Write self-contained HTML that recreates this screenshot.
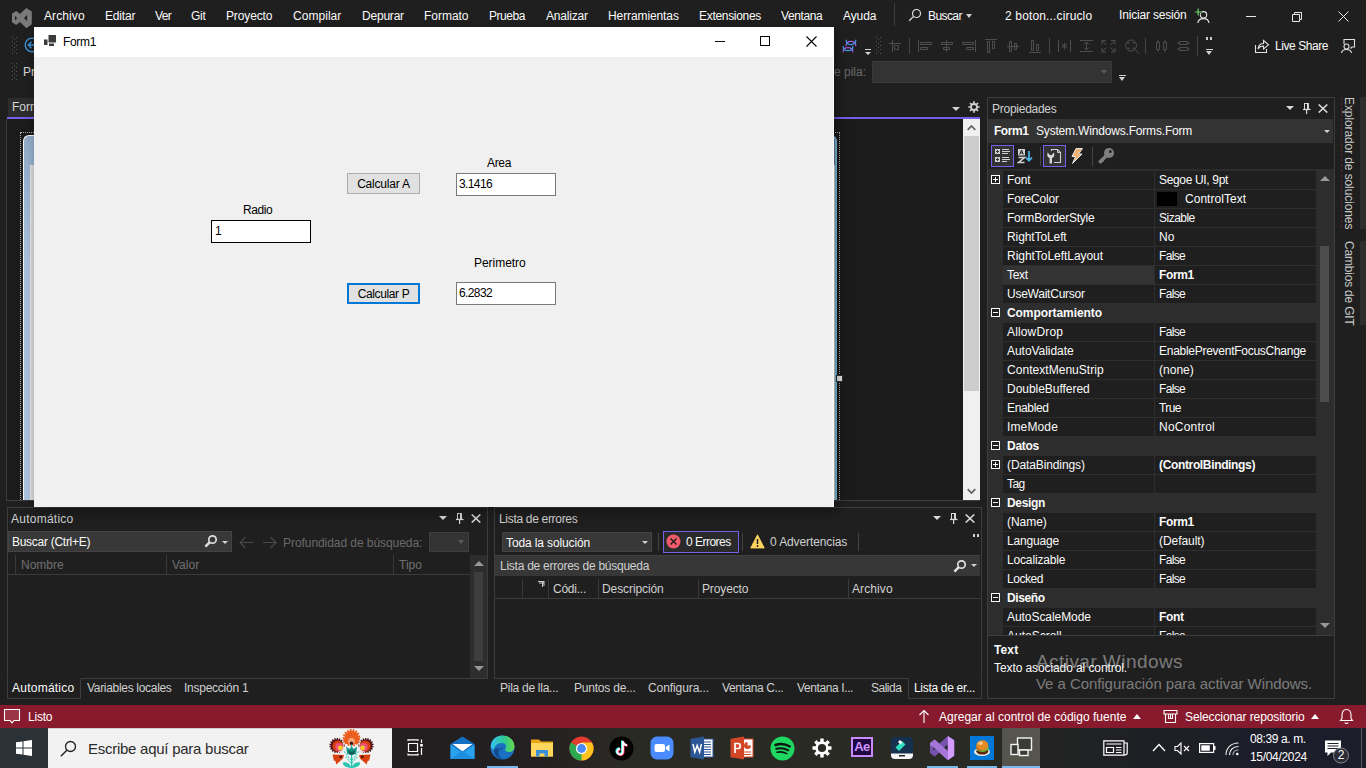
<!DOCTYPE html>
<html lang="es"><head>
<meta charset="utf-8">
<title>Form1</title>
<style>
*{box-sizing:border-box;margin:0;padding:0}
html,body{width:1366px;height:768px;overflow:hidden;background:#1f1f1f}
body{position:relative;font-family:"Liberation Sans",sans-serif;font-size:12px;color:#fafafa}
.a{position:absolute;white-space:nowrap}
.t{position:absolute;white-space:nowrap;line-height:16px;height:16px}
.dim{color:#6d6d6d}
.gr{color:#d6d6d6}
/* menu */
#menubar{left:0;top:0;width:1366px;height:30px;background:#1f1f1f}
#menubar .t{top:8px;font-size:12px;color:#fafafa}
/* status */
#status{left:0;top:705px;width:1366px;height:23px;background:#871b2d}
#status .t{top:4px;font-size:12px;color:#fff}
/* taskbar */
#taskbar{left:0;top:728px;width:1366px;height:40px;background:linear-gradient(90deg,#22262a 0,#221f20 29%,#241f20 39%,#2a2a25 46%,#2a2a24 72%,#222322 77%,#1f2025 84%,#1c1d2b 95%)}
/* panels */
.panel{position:absolute;border:1px solid #3d3d3d;background:#1f1f1f}
/* form window */
#form{left:34px;top:27px;width:800px;height:480px;background:#f0f0f0;box-shadow:3px 4px 12px 0 rgba(0,0,0,.4)}
#ftitle{left:0;top:0;width:800px;height:30px;background:#fff}
#form .t{color:#000;font-size:12px}
.tb{position:absolute;background:#fff;border:1px solid #7a7a7a;height:23px;width:100px;color:#000;font-size:12px;line-height:21px;padding-left:2px}
.btn{position:absolute;background:#e1e1e1;border:1px solid #adadad;height:21px;width:73px;color:#000;font-size:12px;line-height:20px;text-align:center}
/* property grid */
.pr{position:absolute;left:15px;width:313px;height:19px;background:#1f1f1f;border-bottom:1px solid #2e2e2e}
.pr .n{position:absolute;left:4px;top:1px;line-height:16px;font-size:12px;color:#fafafa}
.pr .v{position:absolute;left:156px;top:1px;line-height:16px;font-size:12px;color:#fafafa}
.pr i{position:absolute;left:151px;top:0;width:1px;height:19px;background:#2e2e2e}
.cat{position:absolute;left:0;width:328px;height:19px;background:#2d2d2d}
.cat .n{position:absolute;left:19px;top:1px;line-height:16px;font-size:12px;font-weight:bold;color:#fafafa}
.pm{position:absolute;left:3px;width:9px;height:9px;border:1px solid #fafafa;background:#1f1f1f}
.pm:before{content:"";position:absolute;left:1px;top:3px;width:5px;height:1px;background:#fafafa}
.pm.plus:after{content:"";position:absolute;left:3px;top:1px;width:1px;height:5px;background:#fafafa}
b{font-weight:bold}
</style>
</head>
<body>

<!-- ===== MENU BAR ===== -->
<div id="menubar" class="a">
  <div class="t" style="left: 44px; letter-spacing: 0.1px;">Archivo</div>
  <div class="t" style="left: 105px; letter-spacing: -0.19px;">Editar</div>
  <div class="t" style="left: 155px; letter-spacing: -0.64px;">Ver</div>
  <div class="t" style="left: 191px; letter-spacing: -0.25px;">Git</div>
  <div class="t" style="left: 226px; letter-spacing: -0.13px;">Proyecto</div>
  <div class="t" style="left: 293px; letter-spacing: 0.04px;">Compilar</div>
  <div class="t" style="left: 362px; letter-spacing: -0.21px;">Depurar</div>
  <div class="t" style="left: 424px; letter-spacing: -0.03px;">Formato</div>
  <div class="t" style="left: 489px; letter-spacing: -0.45px;">Prueba</div>
  <div class="t" style="left: 546px; letter-spacing: -0.18px;">Analizar</div>
  <div class="t" style="left: 608px; letter-spacing: -0.1px;">Herramientas</div>
  <div class="t" style="left: 699px; letter-spacing: -0.31px;">Extensiones</div>
  <div class="t" style="left: 781px; letter-spacing: -0.41px;">Ventana</div>
  <div class="t" style="left: 843px; letter-spacing: -0.1px;">Ayuda</div>
  <div class="t" style="left: 928px; letter-spacing: -0.58px;">Buscar</div>
  <div class="t" style="left: 1005px; letter-spacing: 0.15px;">2 boton...ciruclo</div>
  <div class="t" style="left: 1119px; top: 7px; letter-spacing: -0.18px;">Iniciar sesión</div>
</div>


<!-- VS logo -->
<svg class="a" style="left:11px;top:7px" width="22" height="22" viewBox="0 0 22 22"><path d="M1 6.700 L5.200 4 L9 6.900 L15.300 0.900 L20.800 4.400 V17.300 L15.300 21.200 L9 15.100 L5.200 18 L1 15.300 Z M4 8.700 V13.400 L6.100 11 Z M16.100 7.900 V14.100 L13 11 Z" fill="#7a7a7a" fill-rule="evenodd"></path></svg>
<!-- search icon in menubar -->
<svg class="a" style="left:908px;top:8px" width="14" height="14" viewBox="0 0 14 14"><circle cx="8.5" cy="5.5" r="4" fill="none" stroke="#e0e0e0" stroke-width="1.2"></circle><path d="M5.6 8.4 L1.2 12.8" stroke="#e0e0e0" stroke-width="1.3"></path></svg>
<div class="a" style="left:966px;top:14px;border:3.5px solid transparent;border-top:4px solid #d0d0d0;width:0;height:0"></div>
<div class="a" style="left:894px;top:3px;width:1px;height:23px;background:#3d3d3d"></div>
<!-- sign-in user icon -->
<svg class="a" style="left:1194px;top:7px" width="17" height="17" viewBox="0 0 17 17"><circle cx="9.500" cy="7.800" r="3.200" fill="none" stroke="#e8e8e8" stroke-width="1.100"></circle><path d="M3.800 16 C4.200 12.400 7 11.600 9.500 11.600 C12 11.600 14.600 12.400 15 16" fill="none" stroke="#e8e8e8" stroke-width="1.100"></path><path d="M4.200 1.600 V8.400 M0.800 5 H7.600" stroke="#1f1f1f" stroke-width="2.600"></path><path d="M4.200 1.600 V8.400 M0.800 5 H7.600" stroke="#6fd36f" stroke-width="1.200"></path></svg>
<!-- window controls -->
<div class="a" style="left:1246px;top:16px;width:10px;height:1px;background:#e8e8e8"></div>
<svg class="a" style="left:1291px;top:11px" width="12" height="12" viewBox="0 0 12 12"><path d="M1.5 3.5 H8.5 V10.5 H1.5 Z" fill="none" stroke="#e8e8e8" stroke-width="1"></path><path d="M3.5 3.5 V1.5 H10.5 V8.5 H8.5" fill="none" stroke="#e8e8e8" stroke-width="1"></path></svg>
<svg class="a" style="left:1338px;top:11px" width="11" height="11" viewBox="0 0 11 11"><path d="M0.5 0.5 L10.5 10.5 M10.5 0.5 L0.5 10.5" stroke="#e8e8e8" stroke-width="1"></path></svg>

<!-- ===== TOOLBAR ROW 1 ===== -->
<svg class="a" style="left:11px;top:36px" width="6" height="46" viewBox="0 0 6 46"><g fill="#555"><rect x="1" y="1" width="1" height="1"></rect><rect x="3" y="3" width="1" height="1"></rect><rect x="1" y="5" width="1" height="1"></rect><rect x="3" y="7" width="1" height="1"></rect><rect x="1" y="9" width="1" height="1"></rect><rect x="3" y="11" width="1" height="1"></rect><rect x="1" y="13" width="1" height="1"></rect><rect x="3" y="15" width="1" height="1"></rect><rect x="1" y="17" width="1" height="1"></rect><rect x="5" y="1" width="1" height="1"></rect><rect x="5" y="5" width="1" height="1"></rect><rect x="5" y="9" width="1" height="1"></rect><rect x="5" y="13" width="1" height="1"></rect><rect x="5" y="17" width="1" height="1"></rect>
<rect x="1" y="27" width="1" height="1"></rect><rect x="3" y="29" width="1" height="1"></rect><rect x="1" y="31" width="1" height="1"></rect><rect x="3" y="33" width="1" height="1"></rect><rect x="1" y="35" width="1" height="1"></rect><rect x="3" y="37" width="1" height="1"></rect><rect x="1" y="39" width="1" height="1"></rect><rect x="3" y="41" width="1" height="1"></rect><rect x="1" y="43" width="1" height="1"></rect><rect x="5" y="27" width="1" height="1"></rect><rect x="5" y="31" width="1" height="1"></rect><rect x="5" y="35" width="1" height="1"></rect><rect x="5" y="39" width="1" height="1"></rect><rect x="5" y="43" width="1" height="1"></rect></g></svg>
<svg class="a" style="left:24px;top:37px" width="16" height="16" viewBox="0 0 16 16"><circle cx="8" cy="8" r="6.8" fill="none" stroke="#3a96dd" stroke-width="1.3"></circle><path d="M12 8 H4.5 M7.5 4.8 L4.3 8 L7.5 11.2" fill="none" stroke="#3a96dd" stroke-width="1.3"></path></svg>
<div class="t" style="left:23px;top:64px;font-size:12px;color:#d6d6d6">Proceso:</div>


<!-- toolbar row1 right icons -->
<svg class="a" style="left:842px;top:39px" width="15" height="14" viewBox="0 0 15 14" fill="none" stroke-width="1.250" stroke-linecap="round"><g><path d="M4.200 6.600 C4.200 3.300 6.700 2.300 8.900 2.300 C11.200 2.300 13.800 3.300 13.800 6.600" stroke="#a45ddb"></path><path d="M4.200 1.200 C4.200 4.300 6.700 5.500 8.900 5.500 C11.200 5.500 13.800 4.300 13.800 1.200" stroke="#3f9cf0"></path></g><g transform="translate(-3 6.200)"><path d="M4.200 6.600 C4.200 3.300 6.700 2.300 8.900 2.300 C11.200 2.300 13.800 3.300 13.800 6.600" stroke="#a45ddb"></path><path d="M4.200 1.200 C4.200 4.300 6.700 5.500 8.900 5.500 C11.200 5.500 13.800 4.300 13.800 1.200" stroke="#3f9cf0"></path></g></svg>
<div class="a" style="left:865px;top:49px;width:6px;height:1px;background:#d0d0d0"></div>
<div class="a" style="left:865px;top:52px;border:3px solid transparent;border-top:3.500px solid #d8d8d8;width:0;height:0"></div>
<svg class="a" style="left:875px;top:36px" width="6" height="19" viewBox="0 0 6 19"><g fill="#555"><rect x="1" y="1" width="1" height="1"></rect><rect x="3" y="3" width="1" height="1"></rect><rect x="1" y="5" width="1" height="1"></rect><rect x="3" y="7" width="1" height="1"></rect><rect x="1" y="9" width="1" height="1"></rect><rect x="3" y="11" width="1" height="1"></rect><rect x="1" y="13" width="1" height="1"></rect><rect x="3" y="15" width="1" height="1"></rect><rect x="1" y="17" width="1" height="1"></rect><rect x="5" y="1" width="1" height="1"></rect><rect x="5" y="5" width="1" height="1"></rect><rect x="5" y="9" width="1" height="1"></rect><rect x="5" y="13" width="1" height="1"></rect><rect x="5" y="17" width="1" height="1"></rect></g></svg>
<svg class="a" style="left:888px;top:38px" width="304" height="16" viewBox="0 0 304 16" fill="none" stroke="#4e4e4e" stroke-width="1">
 <!-- align to grid (x 889-901) -->
 <path d="M1 5.5 H13 M4.5 2 V14 M6.5 7.5 H10.5 V11.5 H6.5 Z"></path>
 <!-- sep 909 -->
 <path d="M21.5 -2 V18" stroke="#444"></path>
 <!-- lefts 918-932 -->
 <path d="M30.5 2 V14 M32.5 4.5 H43.5 V6.5 H32.5 Z M32.5 9.5 H39.5 V11.5 H32.5 Z"></path>
 <!-- centers 941-953 -->
 <path d="M58.5 2 V14 M53.5 4.500 H64.5 V6.5 H53.5 Z M55.5 9.5 H61.5 V11.5 H55.5 Z"></path>
 <!-- rights 962-976 -->
 <path d="M87.500 2 V14 M74.5 4.5 H85.5 V6.5 H74.5 Z M78.5 9.5 H85.5 V11.5 H78.5 Z"></path>
 <!-- tops 985-997 -->
 <path d="M97 1.500 H109 M99.5 3.5 H101.5 V14.5 H99.5 Z M104.5 3.5 H106.5 V10.5 H104.5 Z"></path>
 <!-- middles 1007-1019 -->
 <path d="M119 8.500 H131 M121.5 3.5 H123.5 V13.5 H121.5 Z M126.500 5.5 H128.5 V11.5 H126.5 Z"></path>
 <!-- bottoms 1029-1041 -->
 <path d="M141 14.500 H153 M143.5 2.5 H145.5 V12.5 H143.5 Z M148.500 6.5 H150.5 V12.5 H148.5 Z"></path>
 <!-- sep 1049 -->
 <path d="M161.500 -2 V18" stroke="#444"></path>
 <!-- same width 1058-1071 -->
 <path d="M170.500 2 V14 M182.500 2 V14 M176.5 4.5 V11.500 M173.500 6 L179.500 10 M179.500 6 L173.5 10"></path>
 <!-- same height 1080-1093 -->
 <path d="M192 2.500 H205 M192 13.500 H205 M198.500 4 V12 M196 6.500 L198.500 4 L201 6.500 M196 9.500 L198.500 12 L201 9.500"></path>
 <!-- same size 1101-1115 -->
 <path d="M214 6.500 V2.500 H218 M223 2.500 H227 V6.500 M227 10 V14 H223 M218 14 H214 V10 M214.500 3 L218.500 7 M226.500 3 L222.500 7 M226.500 13.500 L222.500 9.500 M214.500 13.500 L218.500 9.500"></path>
 <!-- size to grid (magnifier) 1124-1139 -->
 <circle cx="243" cy="7.5" r="5.500"></circle><path d="M247 11.500 L251 15.500 M240 6 V4.500 H241.500 M244.500 4.500 H246 V6 M246 9 V10.500 H244.500 M241.500 10.500 H240 V9"></path>
 <!-- sep 1145 -->
 <path d="M257.500 -2 V18" stroke="#444"></path>
 <!-- horiz spacing 1156-1167 -->
 <path d="M268.500 4.500 H271.500 V11.500 H268.500 Z M275.500 4.500 H278.500 V11.500 H275.500 Z M270 2 V4 M270 12 V14 M277 2 V4 M277 12 V14"></path>
 <!-- vert spacing 1177-1190 -->
 <path d="M291.500 3.500 H299.500 V6.500 H291.500 Z M291.500 9.500 H299.500 V12.500 H291.500 Z M289 5 H291 M300 5 H302 M289 11 H291 M300 11 H302"></path>
</svg>
<div class="a" style="left:1197px;top:36px;width:1px;height:20px;background:#444"></div>
<!-- overflow -->
<div class="a" style="left:1206px;top:37px;width:2px;height:3px;background:#d0d0d0"></div>
<div class="a" style="left:1210px;top:37px;width:2px;height:3px;background:#d0d0d0"></div>
<div class="a" style="left:1206px;top:49px;width:7px;height:1px;background:#d0d0d0"></div>
<div class="a" style="left:1206px;top:51px;border:3.5px solid transparent;border-top:4px solid #d0d0d0;width:0;height:0"></div>
<!-- live share -->
<svg class="a" style="left:1254px;top:38px" width="16" height="16" viewBox="0 0 16 16" fill="none" stroke="#e0e0e0" stroke-width="1.1"><path d="M1.500 7 V14.500 H12.500 V11"></path><path d="M4 11 C4.500 7 7 5.500 9.500 5.500 V2.500 L14.500 6.800 L9.500 11 V8 C7.500 8 5.500 8.500 4 11 Z"></path></svg>
<div class="t" style="left: 1275px; top: 38px; font-size: 12px; color: rgb(250, 250, 250); letter-spacing: -0.44px;">Live Share</div>
<svg class="a" style="left:1340px;top:38px" width="16" height="16" viewBox="0 0 16 16" fill="none" stroke="#e0e0e0" stroke-width="1.1"><path d="M4 6 V1.500 H14.500 V9 H12 L10.500 10.500"></path><circle cx="6.500" cy="8.500" r="2.500"></circle><path d="M1.500 15 C2 11.800 4.500 11.500 6.500 11.500 C8.500 11.500 11 11.800 11.500 15"></path></svg>

<!-- ===== TOOLBAR ROW 2 ===== -->
<div class="t" style="left:760px;top:64px;font-size:12px;color:#6a6a6a;width:106px;text-align:right">Marco de pila:</div>
<div class="a" style="left:872px;top:61px;width:240px;height:22px;background:#333333;border:1px solid #3a3a3a"></div>
<div class="a" style="left:1101px;top:70px;border:3.500px solid transparent;border-top:4px solid #5a5a5a;width:0;height:0"></div>
<div class="a" style="left:1119px;top:75px;width:7px;height:1px;background:#d0d0d0"></div>
<div class="a" style="left:1119px;top:77px;border:3.5px solid transparent;border-top:4px solid #d0d0d0;width:0;height:0"></div>


<!-- ===== DOCUMENT WELL ===== -->
<div class="a" style="left:8px;top:98px;width:120px;height:19px;background:#2d2d2d"></div>
<div class="t" style="left:12px;top:99px;font-size:12px;color:#d6d6d6">Form1.cs [Diseño]</div>
<div class="a" style="left:7px;top:117px;width:973px;height:2px;background:#7160e8"></div>
<div class="a" style="left:952px;top:107px;border:4px solid transparent;border-top:4.5px solid #d0d0d0;width:0;height:0"></div>
<svg class="a" style="left:968px;top:101px" width="12" height="12" viewBox="0 0 12 12"><circle cx="6" cy="6" r="3" fill="none" stroke="#d0d0d0" stroke-width="1.800"></circle><g stroke="#d0d0d0" stroke-width="1.700"><path d="M6 0.300 V2.500 M6 9.500 V11.700 M0.300 6 H2.500 M9.500 6 H11.700 M2 2 L3.500 3.500 M8.500 8.500 L10 10 M10 2 L8.500 3.500 M3.500 8.500 L2 10"></path></g></svg>
<!-- designer surface -->
<div class="a" style="left:6px;top:119px;width:974px;height:382px;background:#1b1b1b;border-left:1px solid #3d3d3d;border-bottom:1px solid #3d3d3d"></div>
<div class="a" style="left:7px;top:119px;width:956px;height:381px;overflow:hidden">
<!-- selection dotted border -->
<div class="a" style="left:13px;top:13px;width:820px;height:380px;border:1px dotted #b0b0b0"></div>
<!-- form in designer (aero frame) -->
<div class="a" style="left:16px;top:16px;width:814px;height:370px;border-radius:6px 6px 0 0;background:linear-gradient(180deg,#93acca 0,#a9c1de 120px,#adc4e0 100%);border:1px solid #f4f7fa;border-right:2px solid #7cc3e3"></div>
<div class="a" style="left:827px;top:20px;width:1px;height:366px;background:#6a8099"></div>
<div class="a" style="left:23px;top:46px;width:805px;height:340px;background:#dadada;border-left:1px solid #e8e8e8"></div>
<div class="a" style="left:829px;top:256px;width:7px;height:7px;background:#e8e8e8;border:1px solid #333"></div>
</div>
<!-- designer v scrollbar -->
<div class="a" style="left:963px;top:119px;width:17px;height:381px;background:#f0f0f0"></div>
<div class="a" style="left:964px;top:136px;width:15px;height:255px;background:#cdcdcd"></div>
<svg class="a" style="left:967px;top:124px" width="9" height="7" viewBox="0 0 9 7"><path d="M0.700 5.800 L4.500 2 L8.300 5.800" fill="none" stroke="#606060" stroke-width="1.700"></path></svg>
<svg class="a" style="left:967px;top:488px" width="9" height="7" viewBox="0 0 9 7"><path d="M0.700 1.200 L4.500 5 L8.300 1.200" fill="none" stroke="#606060" stroke-width="1.700"></path></svg>



<!-- ===== AUTOS PANEL ===== -->
<div class="panel" style="left:7px;top:507px;width:481px;height:172px"></div>
<div class="t" style="left: 11px; top: 511px; font-size: 12px; color: rgb(208, 208, 208); letter-spacing: 0.25px;">Automático</div>
<div class="a" style="left:439px;top:516px;border:4px solid transparent;border-top:4.500px solid #d8d8d8;border-bottom:0;width:0;height:0"></div>
<svg class="a" style="left:456px;top:513px" width="8" height="11" viewBox="0 0 8 11"><path d="M1.500 0 V6 M1 0.500 H6" fill="none" stroke="#d8d8d8" stroke-width="1"></path><rect x="4" y="0" width="2" height="6" fill="#d8d8d8"></rect><rect x="0" y="5.800" width="7.500" height="1.300" fill="#d8d8d8"></rect><rect x="3" y="7" width="1.200" height="4" fill="#d8d8d8"></rect></svg>
<svg class="a" style="left:471px;top:514px" width="10" height="9" viewBox="0 0 10 9"><path d="M0.700 0.500 L9.300 8.500 M9.300 0.500 L0.700 8.500" stroke="#d8d8d8" stroke-width="1.600"></path></svg>
<div class="a" style="left:8px;top:531px;width:224px;height:21px;background:#383838;border:1px solid #434343"></div>
<div class="t" style="left: 12px; top: 534px; font-size: 12px; color: rgb(250, 250, 250); letter-spacing: -0.28px;">Buscar (Ctrl+E)</div>
<svg class="a" style="left:204px;top:534px" width="14" height="14" viewBox="0 0 14 14"><circle cx="8.500" cy="5.500" r="3.700" fill="none" stroke="#e0e0e0" stroke-width="1.700"></circle><path d="M5.800 8.200 L1.400 12.600" stroke="#e0e0e0" stroke-width="2.500"></path></svg>
<div class="a" style="left:222px;top:541px;border:3px solid transparent;border-top:3.500px solid #d0d0d0;width:0;height:0"></div>
<svg class="a" style="left:239px;top:536px" width="38" height="13" viewBox="0 0 38 13" fill="none" stroke="#4a4a4a" stroke-width="1.100"><path d="M1 6.500 H14 M6.500 1 L1 6.500 L6.500 12"></path><path d="M24 6.500 H37 M31.500 1 L37 6.500 L31.500 12"></path></svg>
<div class="t" style="left: 283px; top: 535px; font-size: 12px; color: rgb(106, 106, 106); letter-spacing: -0.06px;">Profundidad de búsqueda:</div>
<div class="a" style="left:429px;top:532px;width:40px;height:20px;background:#333;border:1px solid #3d3d3d"></div>
<div class="a" style="left:458px;top:540px;border:3.500px solid transparent;border-top:4px solid #5a5a5a;width:0;height:0"></div>
<div class="a" style="left:8px;top:574px;width:462px;height:1px;background:#3a3a3a"></div>
<div class="a" style="left:15px;top:555px;width:1px;height:19px;background:#3a3a3a"></div>
<div class="a" style="left:166px;top:555px;width:1px;height:19px;background:#3a3a3a"></div>
<div class="a" style="left:393px;top:555px;width:1px;height:19px;background:#3a3a3a"></div>
<div class="t" style="left:21px;top:557px;font-size:12px;color:#707070">Nombre</div>
<div class="t" style="left:172px;top:557px;font-size:12px;color:#707070">Valor</div>
<div class="t" style="left:399px;top:557px;font-size:12px;color:#707070">Tipo</div>
<div class="a" style="left:470px;top:555px;width:17px;height:123px;background:#2d2d2d"></div>
<div class="a" style="left:474px;top:572px;width:9px;height:89px;background:#3e3e3e"></div>
<div class="a" style="left:474px;top:561px;border:5px solid transparent;border-bottom:5.500px solid #999;border-top:0;width:0;height:0"></div>
<div class="a" style="left:474px;top:666px;border:5px solid transparent;border-top:5.500px solid #999;border-bottom:0;width:0;height:0"></div>
<!-- autos tabs -->
<div class="a" style="left:7px;top:678px;width:74px;height:21px;background:#1f1f1f;border:1px solid #3d3d3d;border-top:1px solid #1f1f1f"></div>
<div class="t" style="left: 12px; top: 680px; font-size: 12px; color: rgb(250, 250, 250); letter-spacing: 0.24px;">Automático</div>
<div class="t" style="left: 87px; top: 680px; font-size: 12px; color: rgb(208, 208, 208); letter-spacing: -0.31px;">Variables locales</div>
<div class="t" style="left: 184px; top: 680px; font-size: 12px; color: rgb(208, 208, 208); letter-spacing: -0.25px;">Inspección 1</div>

<!-- ===== ERROR LIST PANEL ===== -->
<div class="panel" style="left:494px;top:507px;width:488px;height:172px"></div>
<div class="t" style="left: 499px; top: 511px; font-size: 12px; color: rgb(208, 208, 208); letter-spacing: -0.31px;">Lista de errores</div>
<div class="a" style="left:933px;top:516px;border:4px solid transparent;border-top:4.500px solid #d8d8d8;border-bottom:0;width:0;height:0"></div>
<svg class="a" style="left:950px;top:513px" width="8" height="11" viewBox="0 0 8 11"><path d="M1.500 0 V6 M1 0.500 H6" fill="none" stroke="#d8d8d8" stroke-width="1"></path><rect x="4" y="0" width="2" height="6" fill="#d8d8d8"></rect><rect x="0" y="5.800" width="7.500" height="1.300" fill="#d8d8d8"></rect><rect x="3" y="7" width="1.200" height="4" fill="#d8d8d8"></rect></svg>
<svg class="a" style="left:965px;top:514px" width="10" height="9" viewBox="0 0 10 9"><path d="M0.700 0.500 L9.300 8.500 M9.300 0.500 L0.700 8.500" stroke="#d8d8d8" stroke-width="1.600"></path></svg>
<div class="a" style="left:502px;top:532px;width:150px;height:20px;background:#383838;border:1px solid #434343"></div>
<div class="t" style="left: 506px; top: 535px; font-size: 12px; color: rgb(250, 250, 250); letter-spacing: -0.12px;">Toda la solución</div>
<div class="a" style="left:642px;top:541px;border:3px solid transparent;border-top:3.500px solid #d0d0d0;width:0;height:0"></div>
<div class="a" style="left:658px;top:533px;width:1px;height:18px;background:#444"></div>
<div class="a" style="left:663px;top:531px;width:76px;height:22px;background:#2a2a2a;border:1px solid #7160e8"></div>
<svg class="a" style="left:666px;top:534px" width="15" height="15" viewBox="0 0 15 15"><circle cx="7.500" cy="7.500" r="7" fill="#f15a6b"></circle><path d="M4.500 4.500 L10.500 10.500 M10.500 4.500 L4.500 10.500" stroke="#1a1a1a" stroke-width="1.400"></path></svg>
<div class="t" style="left: 686px; top: 534px; font-size: 12px; color: rgb(250, 250, 250); letter-spacing: -0.51px;">0 Errores</div>
<div class="a" style="left:742px;top:533px;width:1px;height:18px;background:#444"></div>
<svg class="a" style="left:750px;top:534px" width="15" height="15" viewBox="0 0 15 15"><path d="M7.500 0.800 L14.300 14 H0.700 Z" fill="#ffd45e" stroke="#ffd45e" stroke-width="0.800" stroke-linejoin="round"></path><path d="M7.500 5 V10" stroke="#1a1a1a" stroke-width="1.500"></path><circle cx="7.500" cy="12" r="0.900" fill="#1a1a1a"></circle></svg>
<div class="t" style="left: 770px; top: 534px; font-size: 12px; color: rgb(208, 208, 208); letter-spacing: -0.11px;">0 Advertencias</div>
<div class="a" style="left:858px;top:533px;width:1px;height:18px;background:#444"></div>
<div class="a" style="left:973px;top:534px;width:2px;height:3px;background:#d0d0d0"></div>
<div class="a" style="left:977px;top:534px;width:2px;height:3px;background:#d0d0d0"></div>
<div class="a" style="left:495px;top:555px;width:485px;height:21px;background:#373737;border-top:1px solid #414141"></div>
<div class="t" style="left: 500px; top: 558px; font-size: 12px; color: rgb(208, 208, 208); letter-spacing: -0.25px;">Lista de errores de búsqueda</div>
<svg class="a" style="left:953px;top:559px" width="14" height="14" viewBox="0 0 14 14"><circle cx="8.500" cy="5.500" r="3.700" fill="none" stroke="#e0e0e0" stroke-width="1.700"></circle><path d="M5.800 8.200 L1.400 12.600" stroke="#e0e0e0" stroke-width="2.500"></path></svg>
<div class="a" style="left:971px;top:564px;border:3px solid transparent;border-top:3.500px solid #d0d0d0;width:0;height:0"></div>
<div class="a" style="left:495px;top:598px;width:486px;height:1px;background:#3a3a3a"></div>
<div class="a" style="left:522px;top:579px;width:1px;height:19px;background:#3a3a3a"></div>
<div class="a" style="left:548px;top:579px;width:1px;height:19px;background:#3a3a3a"></div>
<div class="a" style="left:598px;top:579px;width:1px;height:19px;background:#3a3a3a"></div>
<div class="a" style="left:698px;top:579px;width:1px;height:19px;background:#3a3a3a"></div>
<div class="a" style="left:848px;top:579px;width:1px;height:19px;background:#3a3a3a"></div>
<svg class="a" style="left:538px;top:581px" width="7" height="6" viewBox="0 0 7 6"><path d="M0 0.500 H6 M1 2 H6 M4.500 0 V6 M6 0 V5" stroke="#d0d0d0" stroke-width="1"></path></svg>
<div class="t" style="left: 553px; top: 581px; font-size: 12px; color: rgb(208, 208, 208); letter-spacing: -0.24px;">Códi...</div>
<div class="t" style="left: 602px; top: 581px; font-size: 12px; color: rgb(208, 208, 208); letter-spacing: -0.09px;">Descripción</div>
<div class="t" style="left: 702px; top: 581px; font-size: 12px; color: rgb(208, 208, 208); letter-spacing: -0.13px;">Proyecto</div>
<div class="t" style="left: 852px; top: 581px; font-size: 12px; color: rgb(208, 208, 208); letter-spacing: 0.1px;">Archivo</div>
<!-- error list tabs -->
<div class="t" style="left: 500px; top: 680px; font-size: 12px; color: rgb(208, 208, 208); letter-spacing: -0.27px;">Pila de lla...</div>
<div class="t" style="left: 574px; top: 680px; font-size: 12px; color: rgb(208, 208, 208); letter-spacing: -0.21px;">Puntos de...</div>
<div class="t" style="left: 648px; top: 680px; font-size: 12px; color: rgb(208, 208, 208); letter-spacing: -0.08px;">Configura...</div>
<div class="t" style="left: 722px; top: 680px; font-size: 12px; color: rgb(208, 208, 208); letter-spacing: -0.4px;">Ventana C...</div>
<div class="t" style="left: 797px; top: 680px; font-size: 12px; color: rgb(208, 208, 208); letter-spacing: -0.39px;">Ventana I...</div>
<div class="t" style="left: 871px; top: 680px; font-size: 12px; color: rgb(208, 208, 208); letter-spacing: -0.49px;">Salida</div>
<div class="a" style="left:908px;top:678px;width:74px;height:21px;background:#1f1f1f;border:1px solid #3d3d3d;border-top:1px solid #1f1f1f"></div>
<div class="t" style="left: 914px; top: 680px; font-size: 12px; color: rgb(250, 250, 250); letter-spacing: -0.31px;">Lista de er...</div>

<!-- ===== RUNNING FORM WINDOW ===== -->
<div id="form" class="a" style="z-index:20">
  <div id="ftitle" class="a"></div>
  <svg class="a" style="left:10px;top:8px" width="12" height="12" viewBox="0 0 12 12"><rect x="4.500" y="0" width="7.500" height="7.500" fill="#3c3c3c"></rect><rect x="0" y="4.500" width="3.500" height="5.500" fill="#3c3c3c"></rect><rect x="5" y="8.500" width="5" height="2.500" fill="#3c3c3c"></rect></svg>
  <div class="t" style="left: 29px; top: 7px; font-size: 12px; letter-spacing: -0.33px;">Form1</div>
  <div class="a" style="left:681px;top:14px;width:10px;height:1px;background:#000"></div>
  <div class="a" style="left:726px;top:9px;width:10px;height:10px;border:1px solid #000"></div>
  <svg class="a" style="left:772px;top:9px" width="11" height="11" viewBox="0 0 11 11"><path d="M0.500 0.500 L10.500 10.500 M10.500 0.500 L0.500 10.500" stroke="#000" stroke-width="1.100"></path></svg>
  <div class="a" style="left:799px;top:30px;width:1px;height:450px;background:#fbfbfb"></div>
  <!-- controls -->
  <div class="t" style="left: 453px; top: 128px; letter-spacing: -0.34px;">Area</div>
  <div class="btn" style="left: 313px; top: 146px; letter-spacing: -0.2px;">Calcular A</div>
  <div class="tb" style="left: 422px; top: 146px; letter-spacing: -0.62px;">3.1416</div>
  <div class="t" style="left: 209px; top: 175px; letter-spacing: -0.41px;">Radio</div>
  <div class="tb" style="left:177px;top:193px;border-color:#000;padding-left:3px">1</div>
  <div class="t" style="left: 440px; top: 228px; letter-spacing: -0.04px;">Perimetro</div>
  <div class="btn" style="left: 313px; top: 256px; border: 2px solid rgb(0, 120, 215); line-height: 18px; letter-spacing: -0.38px;">Calcular P</div>
  <div class="tb" style="left: 422px; top: 255px; letter-spacing: -0.62px;">6.2832</div>
</div>


<!-- ===== PROPERTIES PANEL ===== -->
<div class="panel" style="left:987px;top:97px;width:348px;height:602px"></div>
<div class="t" style="left: 992px; top: 101px; font-size: 12px; color: rgb(208, 208, 208); letter-spacing: -0.26px;">Propiedades</div>
<div class="a" style="left:1286px;top:106px;border:4px solid transparent;border-top:4.500px solid #d8d8d8;border-bottom:0;width:0;height:0"></div>
<svg class="a" style="left:1303px;top:103px" width="8" height="11" viewBox="0 0 8 11"><path d="M1.500 0 V6 M1 0.500 H6" fill="none" stroke="#d8d8d8" stroke-width="1"></path><rect x="4" y="0" width="2" height="6" fill="#d8d8d8"></rect><rect x="0" y="5.800" width="7.500" height="1.300" fill="#d8d8d8"></rect><rect x="3" y="7" width="1.200" height="4" fill="#d8d8d8"></rect></svg>
<svg class="a" style="left:1318px;top:104px" width="10" height="9" viewBox="0 0 10 9"><path d="M0.700 0.500 L9.300 8.500 M9.300 0.500 L0.700 8.500" stroke="#d8d8d8" stroke-width="1.600"></path></svg>
<div class="a" style="left:988px;top:119px;width:345px;height:24px;background:#333333"></div>
<div class="t" style="left: 994px; top: 123px; font-size: 12px; font-weight: bold; letter-spacing: -0.46px;">Form1</div><div class="t" style="left: 1036px; top: 123px; font-size: 12px; letter-spacing: -0.18px;">System.Windows.Forms.Form</div>
<div class="a" style="left:1324px;top:130px;border:3px solid transparent;border-top:3.500px solid #d0d0d0;width:0;height:0"></div>
<!-- prop toolbar -->
<div class="a" style="left:991px;top:145px;width:23px;height:22px;background:#333;border:1px solid #7160e8"></div>
<svg class="a" style="left:994px;top:148px" width="17" height="16" viewBox="0 0 17 16"><g fill="#d0d0d0"><rect x="1" y="1" width="5" height="5"></rect><rect x="1" y="9" width="5" height="5"></rect><rect x="8" y="1" width="7" height="1"></rect><rect x="8" y="3" width="8" height="1"></rect><rect x="8" y="5" width="6" height="1"></rect><rect x="8" y="9" width="7" height="1"></rect><rect x="8" y="11" width="8" height="1"></rect><rect x="8" y="13" width="5" height="1"></rect></g><path d="M2 3.500 H5 M3.500 2 V5 M2 11.500 H5 M3.500 10 V13" stroke="#333" stroke-width="1"></path></svg>
<svg class="a" style="left:1017px;top:148px" width="16" height="16" viewBox="0 0 16 16"><rect x="1" y="1" width="7" height="6.500" fill="#d0d0d0"></rect><path d="M2.700 6.500 L4.500 2 L6.300 6.500 M3.300 5 H5.700" stroke="#1f1f1f" stroke-width="1" fill="none"></path><path d="M1.500 9.500 H7.500 L1.500 14.500 H7.500" stroke="#d0d0d0" stroke-width="1.600" fill="none"></path><path d="M12 3 V12.500 M9 9.500 L12 12.800 L15 9.500" stroke="#4cb8f0" stroke-width="1.700" fill="none"></path></svg>
<div class="a" style="left:1040px;top:147px;width:1px;height:19px;background:#444"></div>
<div class="a" style="left:1043px;top:145px;width:23px;height:22px;background:#333;border:1px solid #7160e8"></div>
<svg class="a" style="left:1046px;top:148px" width="17" height="16" viewBox="0 0 17 16"><path d="M5.500 3 V1.500 H11.500 L14.500 4.500 V14.500 H8" fill="none" stroke="#d0d0d0" stroke-width="1.100"></path><path d="M11.500 1.500 V4.500 H14.500" fill="none" stroke="#d0d0d0" stroke-width="1"></path><path d="M3.600 15.500 V10 C1.300 9.300 0.600 6.500 1.800 4.500 L3.800 7 H5.800 L7.800 4.500 C9 6.500 8.300 9.300 6 10 V15.500 Z" fill="#d8d8d8"></path></svg>
<svg class="a" style="left:1069px;top:147px" width="16" height="18" viewBox="0 0 16 18"><path d="M7 1.500 H13.500 L9.500 7 H13 L3.500 16.500 L6.500 9.500 H3 Z" fill="#f0b070" stroke="#e8e8e8" stroke-width="1"></path></svg>
<div class="a" style="left:1092px;top:147px;width:1px;height:19px;background:#444"></div>
<svg class="a" style="left:1097px;top:147px" width="18" height="18" viewBox="0 0 18 18"><path d="M10 8 L2.300 15.700" stroke="#7f7f7f" stroke-width="3.400" stroke-linecap="butt"></path><path d="M4 12 L6.500 14.500" stroke="#7f7f7f" stroke-width="2"></path><circle cx="12" cy="6" r="5" fill="#7f7f7f"></circle><circle cx="13.300" cy="4.700" r="1.400" fill="#1f1f1f"></circle></svg>
<!-- grid -->
<div class="a" style="left:988px;top:169px;width:346px;height:466px;background:#2d2d2d"></div>
<div class="a" style="left:988px;top:171px;width:329px;height:464px;overflow:hidden">
  <div class="pr" style="top:0px"><span class="pm plus" style="left:-12px;top:4px"></span><span class="n" style="letter-spacing: -0.15px;">Font</span><i></i><span class="v" style="letter-spacing: -0.34px;">Segoe UI, 9pt</span></div>
  <div class="pr" style="top:19px"><span style="position:absolute;left:154px;top:2px;width:20px;height:14px;background:#000"></span><span class="n" style="letter-spacing: -0.17px;">ForeColor</span><i></i><span class="v" style="left: 182px; letter-spacing: 0.03px;">ControlText</span></div>
  <div class="pr" style="top:38px"><span class="n" style="letter-spacing: -0.21px;">FormBorderStyle</span><i></i><span class="v" style="letter-spacing: -0.51px;">Sizable</span></div>
  <div class="pr" style="top:57px"><span class="n" style="letter-spacing: -0.1px;">RightToLeft</span><i></i><span class="v" style="letter-spacing: 0.13px;">No</span></div>
  <div class="pr" style="top:76px"><span class="n" style="letter-spacing: -0.04px;">RightToLeftLayout</span><i></i><span class="v" style="letter-spacing: -0.67px;">False</span></div>
  <div class="pr" style="top:95px"><span class="n" style="background: rgb(51, 51, 51); left: 0px; padding-left: 4px; width: 151px; height: 18px; top: 0px; line-height: 18px; letter-spacing: -0.3px;">Text</span><i></i><span class="v" style="letter-spacing: -0.38px;"><b>Form1</b></span></div>
  <div class="pr" style="top:114px"><span class="n" style="letter-spacing: -0.24px;">UseWaitCursor</span><i></i><span class="v" style="letter-spacing: -0.67px;">False</span></div>
  <div class="cat" style="top:133px"><span class="pm" style="top:4px"></span><span class="n" style="letter-spacing: -0.07px;">Comportamiento</span></div>
  <div class="pr" style="top:152px"><span class="n" style="letter-spacing: 0.15px;">AllowDrop</span><i></i><span class="v" style="letter-spacing: -0.67px;">False</span></div>
  <div class="pr" style="top:171px"><span class="n" style="letter-spacing: -0.04px;">AutoValidate</span><i></i><span class="v" style="letter-spacing: -0.27px;">EnablePreventFocusChange</span></div>
  <div class="pr" style="top:190px"><span class="n" style="letter-spacing: 0.04px;">ContextMenuStrip</span><i></i><span class="v" style="letter-spacing: 0.02px;">(none)</span></div>
  <div class="pr" style="top:209px"><span class="n" style="letter-spacing: -0.03px;">DoubleBuffered</span><i></i><span class="v" style="letter-spacing: -0.67px;">False</span></div>
  <div class="pr" style="top:228px"><span class="n" style="letter-spacing: -0.34px;">Enabled</span><i></i><span class="v" style="letter-spacing: -0.56px;">True</span></div>
  <div class="pr" style="top:247px"><span class="n" style="letter-spacing: 0.14px;">ImeMode</span><i></i><span class="v" style="letter-spacing: 0.22px;">NoControl</span></div>
  <div class="cat" style="top:266px"><span class="pm" style="top:4px"></span><span class="n" style="letter-spacing: -0.27px;">Datos</span></div>
  <div class="pr" style="top:285px"><span class="pm plus" style="left:-12px;top:4px"></span><span class="n" style="letter-spacing: -0.11px;">(DataBindings)</span><i></i><span class="v" style="letter-spacing: -0.35px;"><b>(ControlBindings)</b></span></div>
  <div class="pr" style="top:304px"><span class="n" style="letter-spacing: -0.59px;">Tag</span><i></i><span class="v"></span></div>
  <div class="cat" style="top:323px"><span class="pm" style="top:4px"></span><span class="n" style="letter-spacing: -0.34px;">Design</span></div>
  <div class="pr" style="top:342px"><span class="n" style="letter-spacing: -0.05px;">(Name)</span><i></i><span class="v" style="letter-spacing: -0.38px;"><b>Form1</b></span></div>
  <div class="pr" style="top:361px"><span class="n" style="letter-spacing: -0.17px;">Language</span><i></i><span class="v" style="letter-spacing: -0.05px;">(Default)</span></div>
  <div class="pr" style="top:380px"><span class="n" style="letter-spacing: -0.16px;">Localizable</span><i></i><span class="v" style="letter-spacing: -0.67px;">False</span></div>
  <div class="pr" style="top:399px"><span class="n" style="letter-spacing: -0.45px;">Locked</span><i></i><span class="v" style="letter-spacing: -0.67px;">False</span></div>
  <div class="cat" style="top:418px"><span class="pm" style="top:4px"></span><span class="n" style="letter-spacing: -0.4px;">Diseño</span></div>
  <div class="pr" style="top:437px"><span class="n" style="letter-spacing: -0.06px;">AutoScaleMode</span><i></i><span class="v" style="letter-spacing: -0.35px;"><b>Font</b></span></div>
  <div class="pr" style="top:456px"><span class="n">AutoScroll</span><i></i><span class="v" style="letter-spacing: -0.67px;">False</span></div>
</div>
<!-- grid scrollbar -->
<div class="a" style="left:1317px;top:169px;width:17px;height:466px;background:#2d2d2d"></div>
<div class="a" style="left:1320px;top:246px;width:9px;height:156px;background:#4d4d4d"></div>
<div class="a" style="left:1320px;top:176px;border:5px solid transparent;border-bottom:5.500px solid #999;border-top:0;width:0;height:0"></div>
<div class="a" style="left:1320px;top:623px;border:5px solid transparent;border-top:5.500px solid #999;border-bottom:0;width:0;height:0"></div>
<!-- description -->
<div class="a" style="left:988px;top:635px;width:346px;height:63px;background:#1f1f1f;border-top:1px solid #3d3d3d"></div>
<div class="t" style="left: 994px; top: 642px; font-size: 12px; letter-spacing: 0.13px;"><b>Text</b></div>
<div class="t" style="left: 994px; top: 660px; font-size: 12px; letter-spacing: -0.09px;">Texto asociado al control.</div>
<!-- watermark -->
<div class="t" style="left: 1036px; top: 651px; font-size: 19px; line-height: 22px; height: 22px; color: rgba(255, 255, 255, 0.42); z-index: 30; letter-spacing: 0.44px;">Activar Windows</div>
<div class="t" style="left: 1036px; top: 675px; font-size: 15px; line-height: 18px; height: 18px; color: rgba(255, 255, 255, 0.42); z-index: 30; letter-spacing: -0.06px;">Ve a Configuración para activar Windows.</div>
<!-- right strip -->
<div class="a" style="left:1360px;top:97px;width:6px;height:132px;background:#2d2d2d"></div>
<div class="a" style="left:1360px;top:241px;width:6px;height:84px;background:#2d2d2d"></div>
<div class="a" style="left:1341px;top:98px;width:0;height:130px;border-left:1px dashed #5a2323"></div>
<div class="a" style="left:1341px;top:97px;font-size:12px;color:#c8c8c8;writing-mode:vertical-rl;line-height:16px;letter-spacing:-0.1px">Explorador de soluciones</div>
<div class="a" style="left:1341px;top:241px;font-size:12px;color:#c8c8c8;writing-mode:vertical-rl;line-height:16px;letter-spacing:-0.2px">Cambios de GIT</div>

<!-- ===== STATUS BAR ===== -->
<div id="status" class="a">
  <svg class="a" style="left:3px;top:3px" width="18" height="17" viewBox="0 0 18 17"><path d="M1.500 1.500 H16.500 V12.500 H11 L9 14.800 L7 12.500 H1.500 Z" fill="#9a3446" stroke="#fff" stroke-width="1.100"></path></svg>
  <div class="t" style="left: 28px; letter-spacing: -0.21px;">Listo</div>
  <svg class="a" style="left:918px;top:4px" width="12" height="15" viewBox="0 0 12 15"><path d="M6 14 V1.500 M1.500 6 L6 1.500 L10.500 6" fill="none" stroke="#fff" stroke-width="1.100"></path></svg>
  <div class="t" style="left: 939px; letter-spacing: 0.02px;">Agregar al control de código fuente</div>
  <div class="a" style="left:1133px;top:9px;border:4px solid transparent;border-bottom:5px solid #fff;border-top:0;width:0;height:0"></div>
  <svg class="a" style="left:1163px;top:4px" width="15" height="15" viewBox="0 0 15 15"><path d="M1 1.500 H14 V5 H1 Z M2.500 5 V13.500 H12.500 V5 M5.500 5 V9.500 H9.500 V5 M7.500 5 V9.500" fill="none" stroke="#fff" stroke-width="1.100"></path></svg>
  <div class="t" style="left: 1185px; letter-spacing: -0.11px;">Seleccionar repositorio</div>
  <div class="a" style="left:1311px;top:9px;border:4px solid transparent;border-bottom:5px solid #fff;border-top:0;width:0;height:0"></div>
  <svg class="a" style="left:1339px;top:3px" width="15" height="17" viewBox="0 0 15 17"><path d="M7.500 1.500 C4.500 1.500 3 4 3 7 V10.500 L1.500 12.500 H13.500 L12 10.500 V7 C12 4 10.500 1.500 7.500 1.500 Z" fill="none" stroke="#fff" stroke-width="1.100"></path><path d="M5.800 14.500 C6.500 15.800 8.500 15.800 9.200 14.500" fill="none" stroke="#fff" stroke-width="1.100"></path></svg>
</div>

<!-- ===== TASKBAR ===== -->
<div id="taskbar" class="a">
  <div class="a" style="left:0;top:0;width:48px;height:40px;background:#2a3238"></div>
  <svg class="a" style="left:16px;top:12px" width="16" height="16" viewBox="0 0 16 16"><path d="M0 2.300 L6.500 1.400 V7.500 H0 Z M7.500 1.250 L16 0 V7.500 H7.500 Z M0 8.500 H6.500 V14.600 L0 13.700 Z M7.500 8.500 H16 V16 L7.500 14.750 Z" fill="#fff"></path></svg>
  <div class="a" style="left:48px;top:0;width:344px;height:40px;background:#f2f2f2;border-top:1px solid #cfcfcf"></div>
  <svg class="a" style="left:60px;top:12px" width="17" height="17" viewBox="0 0 17 17"><circle cx="10.500" cy="6.500" r="5" fill="none" stroke="#222" stroke-width="1.300"></circle><path d="M6.800 10.200 L0.800 16.200" stroke="#222" stroke-width="1.400"></path></svg>
  <div class="t" style="left: 88px; top: 11px; font-size: 15px; line-height: 20px; height: 20px; color: rgb(43, 43, 43); letter-spacing: -0.26px;">Escribe aquí para buscar</div>
  <!-- flower -->
  <svg class="a" style="left:329px;top:1px" width="46" height="39" viewBox="0 0 46 39">
   <circle cx="22.500" cy="8.800" r="7" fill="#ec5e20" stroke="#ec5e20" stroke-width="3.400" stroke-dasharray="1.600 1"></circle>
   <path d="M13.500 8 L22.500 15.500 L31.500 8 L29 15 H16 Z" fill="#ec5e20"></path>
   <ellipse cx="22.500" cy="12.500" rx="3.300" ry="3.800" fill="#f6a478"></ellipse>
   <ellipse cx="22.500" cy="14.300" rx="1.700" ry="1.900" fill="#45100f"></ellipse>
   <g>
    <circle cx="8" cy="16.500" r="6.300" fill="#4a0f14" stroke="#4a0f14" stroke-width="2.600" stroke-dasharray="1.200 1"></circle>
    <path d="M14.500 12 L15 21.500 L9 23.500 Z" fill="#f2f2f2"></path>
    <circle cx="8.800" cy="17" r="5.500" fill="#d93c12"></circle>
    <circle cx="10.200" cy="18" r="3.900" fill="#e8527c"></circle>
    <circle cx="11.400" cy="18.800" r="2.400" fill="#f5cd1e"></circle>
    <path d="M3.500 25.500 L15 26 L14 29.500 L7.200 35.500 L6.500 32 L4.800 31.500 Z" fill="#d8420f"></path>
    <circle cx="11.700" cy="27.800" r="1.400" fill="#45100f"></circle>
    <path d="M22 31 L14.500 21.500" stroke="#55d3c2" stroke-width="1.300" stroke-dasharray="2 1"></path>
    <path d="M22 34 L16 27" stroke="#55d3c2" stroke-width="1.200" stroke-dasharray="2 1"></path>
    <path d="M22.500 39 C17 39 13.500 36.500 14 33.500 C17 32.500 21.500 34.500 22.500 39 Z" fill="#2cc6b2"></path>
   </g>
   <g transform="translate(45 0) scale(-1 1)">
    <circle cx="8" cy="16.500" r="6.300" fill="#4a0f14" stroke="#4a0f14" stroke-width="2.600" stroke-dasharray="1.200 1"></circle>
    <path d="M14.500 12 L15 21.500 L9 23.500 Z" fill="#f2f2f2"></path>
    <circle cx="8.800" cy="17" r="5.500" fill="#d93c12"></circle>
    <circle cx="10.200" cy="18" r="3.900" fill="#e8527c"></circle>
    <circle cx="11.400" cy="18.800" r="2.400" fill="#f5cd1e"></circle>
    <path d="M3.500 25.500 L15 26 L14 29.500 L7.200 35.500 L6.500 32 L4.800 31.500 Z" fill="#d8420f"></path>
    <circle cx="11.700" cy="27.800" r="1.400" fill="#45100f"></circle>
    <path d="M22 31 L14.500 21.500" stroke="#55d3c2" stroke-width="1.300" stroke-dasharray="2 1"></path>
    <path d="M22 34 L16 27" stroke="#55d3c2" stroke-width="1.200" stroke-dasharray="2 1"></path>
    <path d="M22.500 39 C17 39 13.500 36.500 14 33.500 C17 32.500 21.500 34.500 22.500 39 Z" fill="#2cc6b2"></path>
   </g>
   <rect x="22" y="15.500" width="1.200" height="23.500" fill="#2cc6b2"></rect>
   <path d="M17 17.500 L20.300 20 L22.600 17.800 L24.900 20 L28.200 17.500 L27 24.800 L22.600 26.300 L18.200 24.800 Z" fill="#149687"></path>
   <path d="M19.500 21 L22.600 23 L25.700 21 L25.200 25 L22.600 26 L20 25 Z" fill="#0b5f57"></path>
  </svg>
  <!-- task view -->
  <svg class="a" style="left:407px;top:11px" width="18" height="17" viewBox="0 0 18 17" fill="none" stroke="#fff" stroke-width="1.200"><path d="M1 2 V0.800 H11 V2 M1 14.500 V15.800 H11 V14.500 M1.500 4.500 H10.500 V12.500 H1.500 Z M14.500 0.500 V4 M14.500 9 V16"></path><rect x="13.200" y="5" width="2.600" height="2.600" fill="#fff" stroke="none"></rect></svg>
  <!-- mail -->
  <svg class="a" style="left:450px;top:8px" width="25" height="24" viewBox="0 0 25 24"><path d="M0.500 8 L12.500 0.500 L24.500 8 V23 H0.500 Z" fill="#1570c4"></path><path d="M2.500 8 H22.500 L12.500 15.500 Z" fill="#fff"></path><path d="M0.500 8.500 L12.500 17 L24.500 8.500 V23 H0.500 Z" fill="#2aa3ef"></path><path d="M0.500 23 L12.500 14.500 L24.500 23 Z" fill="#1e8ee0"></path></svg>
  <!-- edge -->
  <svg class="a" style="left:490px;top:7px" width="25" height="25" viewBox="0 0 25 25"><defs><linearGradient id="eg" x1="0" y1="0" x2="1" y2="0"><stop offset="0" stop-color="#35c1f1"></stop><stop offset="0.600" stop-color="#2fc98a"></stop><stop offset="1" stop-color="#6ad94a"></stop></linearGradient></defs><circle cx="12.500" cy="12.500" r="12" fill="#1b6fc2"></circle><path d="M0.800 11 C1.500 4.500 6.500 0.500 12.500 0.500 C19.500 0.500 24.500 5.500 24.500 11.500 C24.500 15 22 17 19 17 C16.500 17 15 16 15 14.500 C15 13.500 16 13 16 11.500 C16 9.500 14.500 8 12 8 C7 8 4 11.500 4 15 C2 14 0.800 12.500 0.800 11 Z" fill="url(#eg)"></path><path d="M4 15 C4 20 8 24 13 24.400 C9.500 22.500 8 19.500 8.500 16.500 C9 13.500 11.500 12 12.500 12 C11.500 13 11.500 14.500 12 15.500 C10 13 5 12.500 4 15 Z" fill="#114a8b"></path></svg>
  <div class="a" style="left:487px;top:38px;width:31px;height:2px;background:#76b9ed"></div>
  <!-- explorer -->
  <svg class="a" style="left:530px;top:10px" width="24" height="20" viewBox="0 0 24 20"><path d="M1 1.500 H9 L11 3.500 H23 V18.500 H1 Z" fill="#e8a317"></path><path d="M1 5 H23 V18.500 H1 Z" fill="#ffd75e"></path><path d="M6 12 H18 V18.500 H14.500 V15.500 H9.500 V18.500 H6 Z" fill="#3a8fd8"></path></svg>
  <!-- chrome -->
  <svg class="a" style="left:569px;top:8px" width="25" height="25" viewBox="0 0 25 25"><circle cx="12.500" cy="12.500" r="12" fill="#e33b2e"></circle><path d="M12.500 12.500 L2.100 6.500 A12 12 0 0 0 12.500 24.500 L17.700 15.500 Z" fill="#2da94f"></path><path d="M12.500 12.500 L12.500 24.500 A12 12 0 0 0 22.900 6.500 L12.500 6.500 Z" fill="#fcc31e"></path><circle cx="12.500" cy="12.500" r="5.600" fill="#fff"></circle><circle cx="12.500" cy="12.500" r="4.400" fill="#4a8af4"></circle></svg>
  <!-- tiktok -->
  <svg class="a" style="left:609px;top:8px" width="25" height="25" viewBox="0 0 25 25"><circle cx="12.500" cy="12.500" r="12" fill="#000"></circle><path d="M13.800 5 V15.500 A2.800 2.800 0 1 1 11 12.800 M13.800 5 C14 7.500 15.500 9 18 9.200" fill="none" stroke="#25f4ee" stroke-width="2.200" transform="translate(-0.700,-0.500)"></path><path d="M13.800 5 V15.500 A2.800 2.800 0 1 1 11 12.800 M13.800 5 C14 7.500 15.500 9 18 9.200" fill="none" stroke="#fe2c55" stroke-width="2.200" transform="translate(0.700,0.500)"></path><path d="M13.800 5 V15.500 A2.800 2.800 0 1 1 11 12.800 M13.800 5 C14 7.500 15.500 9 18 9.200" fill="none" stroke="#fff" stroke-width="2"></path></svg>
  <!-- zoom -->
  <svg class="a" style="left:650px;top:8px" width="24" height="24" viewBox="0 0 24 24"><rect x="0.500" y="0.500" width="23" height="23" rx="6.500" fill="#4a8cff"></rect><rect x="4.500" y="8" width="10.500" height="8" rx="2" fill="#fff"></rect><path d="M15.800 11 L19.500 8.500 V15.500 L15.800 13 Z" fill="#fff"></path></svg>
  <!-- word -->
  <svg class="a" style="left:690px;top:8px" width="24" height="24" viewBox="0 0 24 24"><rect x="10" y="3" width="13" height="18" fill="#fff" stroke="#2b5797" stroke-width="1"></rect><path d="M13 6 H21 M13 8.500 H21 M13 11 H21 M13 13.500 H21 M13 16 H21 M13 18.500 H21" stroke="#2b5797" stroke-width="1.200"></path><path d="M0.500 2.800 L14 0.500 V23.500 L0.500 21.200 Z" fill="#2b5797"></path><path d="M3 8 L4.800 16 L7.200 9.500 L9.600 16 L11.400 8" fill="none" stroke="#fff" stroke-width="1.500"></path></svg>
  <!-- powerpoint -->
  <svg class="a" style="left:730px;top:8px" width="24" height="24" viewBox="0 0 24 24"><rect x="10" y="3" width="13" height="18" fill="#fff" stroke="#d24625" stroke-width="1"></rect><circle cx="17.500" cy="9.500" r="3.500" fill="#d24625"></circle><path d="M17.500 9.500 V5.500 H21.500 V9.500 Z" fill="#fff"></path><path d="M13 16 H21 M13 18.500 H21" stroke="#d24625" stroke-width="1.200"></path><path d="M0.500 2.800 L14 0.500 V23.500 L0.500 21.200 Z" fill="#d24625"></path><path d="M5 17 V7.500 H8 C11 7.500 11 12.500 8 12.500 H5" fill="none" stroke="#fff" stroke-width="1.700"></path></svg>
  <!-- spotify -->
  <svg class="a" style="left:770px;top:8px" width="25" height="25" viewBox="0 0 25 25"><circle cx="12.500" cy="12.500" r="12" fill="#1ed760"></circle><path d="M5.500 9 C10 7.500 15.500 8 19.800 10.500" fill="none" stroke="#111" stroke-width="2.400" stroke-linecap="round"></path><path d="M6.300 12.800 C10 11.700 14.500 12.200 18.300 14.300" fill="none" stroke="#111" stroke-width="2" stroke-linecap="round"></path><path d="M7 16.300 C10 15.500 13.500 15.800 16.800 17.600" fill="none" stroke="#111" stroke-width="1.600" stroke-linecap="round"></path></svg>
  <!-- settings -->
  <svg class="a" style="left:812px;top:10px" width="20" height="20" viewBox="0 0 20 20"><g stroke="#fff" stroke-width="3.400"><path d="M10 0.500 V4 M10 16 V19.500 M0.500 10 H4 M16 10 H19.500 M3.300 3.300 L5.800 5.800 M14.200 14.200 L16.700 16.700 M16.700 3.300 L14.200 5.800 M5.800 14.200 L3.300 16.700"></path></g><circle cx="10" cy="10" r="5.400" fill="none" stroke="#fff" stroke-width="2.600"></circle></svg>
  <!-- after effects -->
  <div class="a" style="left:851px;top:9px;width:22px;height:20px;background:#1f0740;border:2px solid #c98bff"></div>
  <div class="t" style="left:852px;top:11px;width:20px;text-align:center;font-size:13px;font-weight:bold;color:#cf96ff;letter-spacing:-0.600px">Ae</div>
  <!-- filmora -->
  <svg class="a" style="left:891px;top:9px" width="22" height="22" viewBox="0 0 22 22"><rect x="0" y="0" width="22" height="22" rx="4" fill="#15314f"></rect><path d="M0 16.500 H22 V18 A4 4 0 0 1 18 22 H4 A4 4 0 0 1 0 18 Z" fill="#f6f6f6"></path><path d="M11 4 L14.500 7.500 L8 14 L4.500 10.500 Z" fill="#2fe0c0"></path><path d="M9 3 L11.500 5.500 L9.500 7.500 L7 5 Z" fill="#fff"></path><rect x="8" y="18" width="6" height="1.500" fill="#222"></rect></svg>
  <!-- visual studio -->
  <svg class="a" style="left:930px;top:8px" width="25" height="25" viewBox="0 0 25 25"><path d="M0 7 L4.600 3.400 L9.500 7.500 L17.800 0 L24.200 4.200 V19.800 L17.800 24.200 L9.500 16.500 L4.600 20.600 L0 17 Z" fill="#7552ad"></path><path d="M3.600 9.800 V14.400 L6.300 12.100 Z" fill="#2a2a25"></path><path d="M17.800 8.300 V15.600 L13.600 11.900 Z" fill="#2a2a25"></path><path d="M0 7 L4.600 3.400 L17.800 14.800 V24.200 L3.400 10.900 L0 9.500 Z" fill="#a576d8"></path><path d="M17.800 0 L24.200 4.200 V19.800 L17.800 24.200 Z" fill="#d59cff"></path></svg>
  <div class="a" style="left:927px;top:38px;width:31px;height:2px;background:#76b9ed"></div>
  <!-- burger -->
  <svg class="a" style="left:970px;top:8px" width="24" height="24" viewBox="0 0 24 24"><rect width="24" height="24" fill="#0078d7"></rect><ellipse cx="12" cy="15.800" rx="8" ry="4.300" fill="#f0ece6"></ellipse><ellipse cx="12.300" cy="15.300" rx="6" ry="3.300" fill="#5a2812"></ellipse><path d="M6.500 13.500 C8 16.500 16 17 18.500 13 L18.800 10.500 L6.300 11 Z" fill="#6fb233"></path><path d="M6.300 12.500 C9 15 13 15 16 12.500 L15.500 10.500 H6.500 Z" fill="#d8352a"></path><ellipse cx="12.300" cy="9.300" rx="6" ry="5" fill="#e38a22"></ellipse><ellipse cx="10.500" cy="7.300" rx="2.600" ry="1.700" fill="#f6c98a"></ellipse></svg>
  <div class="a" style="left:967px;top:38px;width:30px;height:2px;background:#76b9ed"></div>
  <!-- active app -->
  <div class="a" style="left:1002px;top:0;width:38px;height:40px;background:#55554e"></div>
  <svg class="a" style="left:1010px;top:9px" width="23" height="20" viewBox="0 0 23 20"><rect x="7.500" y="1" width="14" height="12" fill="#3a3a36" stroke="#f2f2f2" stroke-width="1.400"></rect><rect x="1" y="7.500" width="7" height="10" fill="#3a3a36" stroke="#f2f2f2" stroke-width="1.400"></rect><rect x="9.500" y="13" width="8.500" height="5.500" fill="#3a3a36" stroke="#f2f2f2" stroke-width="1.400"></rect></svg>
  <div class="a" style="left:1002px;top:38px;width:38px;height:2px;background:#76b9ed"></div>
  <!-- tray -->
  <svg class="a" style="left:1103px;top:12px" width="25" height="16" viewBox="0 0 25 16" fill="none" stroke="#fff" stroke-width="1.200"><path d="M0.800 0.800 H21 V15.200 H0.800 Z M21 3 H24.200 V13 C24.200 14.500 23 15.200 21 15.200"></path><path d="M3.500 4 H18.500 M13 7.500 H18.500 M13 10 H18.500 M13 12.500 H18.500 M3.500 7.500 H10.500 V12.500 H3.500 Z"></path></svg>
  <svg class="a" style="left:1152px;top:15px" width="14" height="9" viewBox="0 0 14 9"><path d="M1 8 L7 1.500 L13 8" fill="none" stroke="#fff" stroke-width="1.300"></path></svg>
  <svg class="a" style="left:1174px;top:14px" width="16" height="13" viewBox="0 0 16 13" fill="none" stroke="#fff" stroke-width="1.100"><path d="M1 4.500 H3.500 L7 1 V12 L3.500 8.500 H1 Z"></path><path d="M10 4 L15 9 M15 4 L10 9"></path></svg>
  <svg class="a" style="left:1199px;top:15px" width="17" height="10" viewBox="0 0 17 10"><rect x="0.600" y="0.600" width="14" height="8.800" fill="none" stroke="#fff" stroke-width="1.200"></rect><rect x="2.300" y="2.300" width="8.500" height="5.400" fill="#fff"></rect><rect x="15" y="3" width="1.500" height="4" fill="#fff"></rect></svg>
  <svg class="a" style="left:1225px;top:14px" width="15" height="14" viewBox="0 0 15 14" fill="none" stroke="#fff" stroke-width="1.200"><path d="M1 13 C1 6 6 1 13.500 1" opacity="0.900"></path><path d="M4.500 13 C4.500 8 8 4.500 13.500 4.500"></path><path d="M8 13 C8 10 10 8 13.500 8" opacity="0.600"></path><circle cx="12.300" cy="12" r="1.300" fill="#fff" stroke="none"></circle></svg>
  <div class="t" style="left: 1250px; top: 3px; font-size: 12px; color: rgb(255, 255, 255); letter-spacing: -0.39px;">08:39 a. m.</div>
  <div class="t" style="left: 1250px; top: 21px; font-size: 12px; color: rgb(255, 255, 255); letter-spacing: -0.31px;">15/04/2024</div>
  <svg class="a" style="left:1324px;top:12px" width="26" height="24" viewBox="0 0 26 24"><path d="M1 0.600 H17 V12.500 H7 L3.500 16 V12.500 H1 Z" fill="#fff"></path><path d="M3.500 3.500 H14.500 M3.500 6 H14.500 M3.500 8.500 H14.500" stroke="#1c1d2b" stroke-width="1"></path><circle cx="17" cy="15.500" r="7.500" fill="#2a2b36" stroke="#8a8a8a" stroke-width="1"></circle></svg>
  <div class="t" style="left:1336px;top:19px;width:10px;text-align:center;font-size:12px;color:#fff">2</div>
  <div class="a" style="left:1361px;top:0;width:1px;height:40px;background:#5a5a5a"></div>
</div>



</body></html>
